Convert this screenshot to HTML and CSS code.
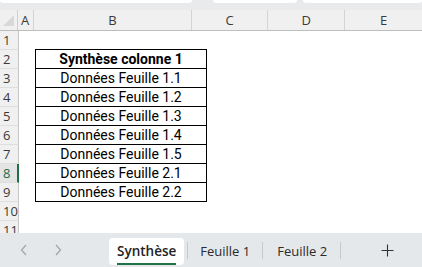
FILE: index.html
```html
<!DOCTYPE html>
<html lang="fr">
<head>
<meta charset="utf-8">
<link rel="stylesheet" href="styles.css">
</head>
<body>
<div class="app">
  <div class="topbar">
    <div class="tb tb1"></div>
    <div class="tb tb2"></div>
    <div class="tb tb3"></div>
  </div>
  <div class="colhead">
    <div class="corner"><svg width="12" height="12" viewBox="0 0 12 12"><polygon points="11,0 11,11 0,11" fill="#d8d8d8"/></svg></div>
    <div class="ch ca">A</div>
    <div class="ch cb">B</div>
    <div class="ch cc">C</div>
    <div class="ch cd">D</div>
    <div class="ch ce">E</div>
  </div>
  <div class="rows">
    <div class="row"><div class="rh">1</div><div class="c a"></div><div class="c b ttop"></div></div>
    <div class="row"><div class="rh">2</div><div class="c a"></div><div class="c b t bold">Synthèse colonne 1</div></div>
    <div class="row"><div class="rh">3</div><div class="c a"></div><div class="c b t">Données Feuille 1.1</div></div>
    <div class="row"><div class="rh">4</div><div class="c a"></div><div class="c b t">Données Feuille 1.2</div></div>
    <div class="row"><div class="rh">5</div><div class="c a"></div><div class="c b t">Données Feuille 1.3</div></div>
    <div class="row"><div class="rh">6</div><div class="c a"></div><div class="c b t">Données Feuille 1.4</div></div>
    <div class="row"><div class="rh">7</div><div class="c a"></div><div class="c b t">Données Feuille 1.5</div></div>
    <div class="row"><div class="rh sel">8</div><div class="c a"></div><div class="c b t">Données Feuille 2.1</div></div>
    <div class="row"><div class="rh">9</div><div class="c a"></div><div class="c b t">Données Feuille 2.2</div></div>
    <div class="row"><div class="rh">10</div><div class="c a"></div><div class="c b"></div></div>
    <div class="row"><div class="rh">11</div><div class="c a"></div><div class="c b"></div></div>
  </div>
  <div class="tabs">
    <div class="nav">
      <svg width="8" height="12" viewBox="0 0 8 12"><polyline points="6,1 1.5,6 6,11" fill="none" stroke="#a0a4a8" stroke-width="1.2"/></svg>
      <svg width="8" height="12" viewBox="0 0 8 12"><polyline points="2,1 6.5,6 2,11" fill="none" stroke="#a0a4a8" stroke-width="1.2"/></svg>
    </div>
    <div class="tab active"><span class="tlabel">Synthèse</span></div>
    <div class="sep sep1"></div>
    <div class="tab plain t1"><span class="tlabel">Feuille 1</span></div>
    <div class="sep"></div>
    <div class="tab plain t2"><span class="tlabel">Feuille 2</span></div>
    <div class="sep"></div>
    <div class="add"><svg width="13" height="13" viewBox="0 0 13 13"><path d="M6.5 0.5V12.5M0.5 6.5H12.5" stroke="#333" stroke-width="1.1" fill="none"/></svg></div>
  </div>
</div>
</body>
</html>
```

FILE: styles.css
```css
* { box-sizing: border-box; }
html, body { margin: 0; padding: 0; }
body { width: 422px; height: 267px; overflow: hidden; background: #fff; }
.app { width: 422px; height: 267px; display: flex; flex-direction: column; overflow: hidden; font-family: "Open Sans", "Noto Sans", sans-serif; }

.topbar { height: 10px; background: #e9eaec; display: flex; flex: none; }
.tb { height: 3px; background: #fff; border-radius: 0 0 4px 4px; }
.tb1 { width: 192px; }
.tb2 { width: 84px; margin-left: 21px; }
.tb3 { flex: 1; margin-left: 6px; }

.colhead { height: 21px; flex: none; display: flex; background: #f0f0f0; border-bottom: 1px solid #bdbdbd; }
.corner { width: 19px; border-right: 1px solid #cfcfcf; display: flex; align-items: flex-end; justify-content: flex-end; padding: 0 2px 3px 0; }
.ch { border-right: 1px solid #d4d4d4; font-size: 13px; color: #3a3a3a; display: flex; align-items: center; justify-content: center; line-height: 1; padding-top: 1px; }
.ch.ca { width: 17px; }
.ch.cb { width: 172px; }
.ch.cc { width: 82px; }
.ch.cd { width: 84px; }
.ch.ce { width: 83px; border-right: none; }

.rows { flex: 1; overflow: hidden; }
.row { height: 19px; display: flex; }
.rh { width: 19px; height: 19px; flex: none; background: #f0f0f0; border-right: 1px solid #c6c6c6; border-bottom: 1px solid #dedede; font-size: 13px; color: #3a3a3a; padding-left: 3px; line-height: 18px; white-space: nowrap; }
.rh.sel { color: #1f6b45; background: #e4e4e4; border-right: 2px solid #1e7145; }
.c { height: 19px; flex: none; }
.c.a { width: 16px; }
.c.b { width: 172px; font-family: Roboto, "Liberation Sans", sans-serif; font-size: 14px; color: #000; text-align: center; line-height: 18px; }
.c.b.ttop { border-bottom: 1px solid #000; }
.c.b.t { border-left: 1px solid #000; border-right: 1px solid #000; border-bottom: 1px solid #000; }
.c.b.bold { font-weight: bold; }

.tabs { height: 34px; flex: none; background: #e5e8eb; display: flex; align-items: center; }
.nav { width: 109px; display: flex; gap: 26px; padding-left: 20px; align-items: center; }
.tab { height: 27px; margin-top: 2px; padding: 0 8px; display: flex; align-items: center; font-size: 13px; color: #2b2b2b; }
.tab.active { background: #fff; border-radius: 4px; font-weight: 600; font-size: 13.5px; color: #222; }
.tab.t1 { padding: 0 12px 0 12px; }
.tab.t2 { padding: 0 13px 0 14px; }
.tlabel { position: relative; }
.tab.active .tlabel::after { content: ""; position: absolute; left: 0; right: 0; bottom: -5px; height: 2px; background: #217346; }
.sep { width: 1px; height: 17px; background: #c7cacd; }
.sep1 { margin-left: 3px; }
.add { flex: 1; display: flex; justify-content: center; padding-left: 12px; }
.add svg { display: block; }
```
